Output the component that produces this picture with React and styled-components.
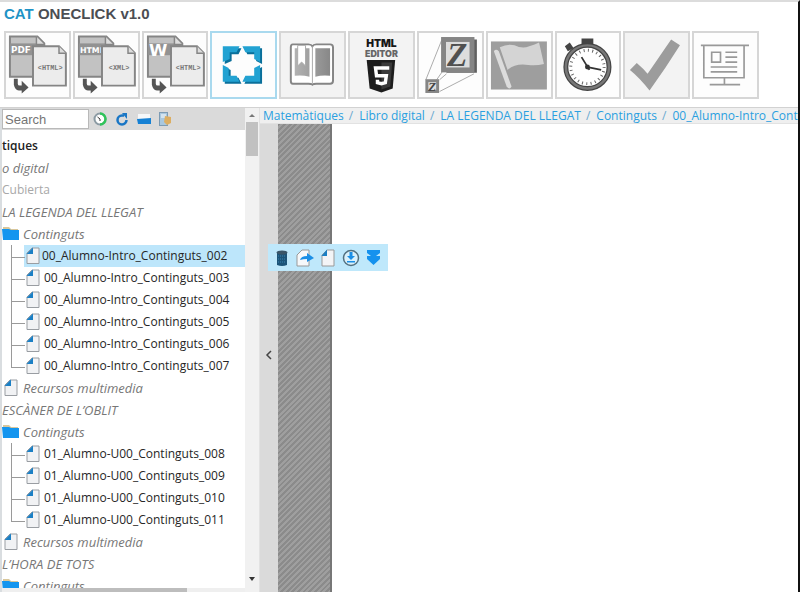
import React from "react";
import styled, { createGlobalStyle } from "styled-components";

const GlobalStyle = createGlobalStyle`
  * { box-sizing: border-box; }
  body { margin: 0; background: #fff; overflow: hidden; font-family: "Trebuchet MS", "Open Sans", sans-serif; font-size: 12px; font-variant-ligatures: none; }
  button { font: inherit; color: inherit; padding: 0; margin: 0; border: 0; background: none; cursor: pointer; }
  svg { display: block; }
`;

const Page = styled.div`
  height: 100vh;
  display: flex;
  flex-direction: column;
  border-top: 2px solid #dcdcdc;
  border-right: 2px solid #111;
`;
const Title = styled.h1`
  margin: 0;
  padding: 3px 4px 0;
  height: 29px;
  font: bold 15px/18px "Liberation Sans", Arial, sans-serif;
  color: #4b4e53;
  span { color: #1f93c6; }
`;
const Toolbar = styled.nav`
  display: grid;
  grid-template-columns: repeat(11, 1fr);
  gap: 2px;
  max-width: 759px;
  padding-left: 4px;
  height: 76px;
  align-items: start;
`;
const Tool = styled.button`
  && {
    height: 68px;
    border: 2px solid ${(p) => (p.$active ? "#a9d9ee" : "#d6d6d6")};
    background: ${(p) => (p.$shade ? "#f3f3f3" : "#fdfdfd")};
  }
  svg { width: 100%; height: 64px; }
`;
const Workspace = styled.div`
  flex: 1;
  min-height: 0;
  display: flex;
  border-top: 1px solid #d2d2d2;
`;
const Sidebar = styled.aside`
  width: 260px;
  flex: none;
  display: flex;
  border-left: 2px solid #d9dde0;
  border-right: 1px solid #e2e2e2;
`;
const Panel = styled.div`
  flex: 1;
  min-width: 0;
  display: flex;
  flex-direction: column;
`;
const SearchBar = styled.div`
  height: 22px;
  flex: none;
  display: flex;
  align-items: center;
  gap: 6px;
  background: #dadada;
`;
const SearchInput = styled.input`
  width: 87px;
  height: 20px;
  margin-right: -3px;
  padding: 0 2px;
  border: 1px solid #b9b9b9;
  background: #fff;
  font: 13px "Liberation Sans", Arial, sans-serif;
  &::placeholder { color: #757575; opacity: 1; }
`;
const SmallButton = styled.button`
  && { width: 16px; height: 16px; }
`;
const Tree = styled.div`
  flex: 1;
  min-height: 0;
  overflow: hidden;
  padding-top: 5px;
`;
const Row = styled.button`
  && {
    width: 100%;
    height: 22px;
    display: flex;
    align-items: center;
    text-align: left;
    white-space: nowrap;
    font-size: 13px;
    line-height: 22px;
    color: #777;
    font-style: italic;
  }
`;
const RootRow = styled(Row)`
  && { color: #222; font-size: 12px; font-style: normal; font-weight: 600; }
`;
const CoverRow = styled(Row)`
  && { color: #a8a8a8; font-size: 12px; font-style: normal; }
`;
const BranchRow = styled(Row)`
  && { gap: 4px; }
`;
const IconSlot = styled.span`
  flex: none;
  width: 17px;
  display: flex;
  justify-content: center;
`;
const Leaf = styled(Row)`
  && { color: #262626; font-size: 12px; font-style: normal; }
`;
const Twig = styled.span`
  position: relative;
  align-self: stretch;
  flex: none;
  width: 22px;
  &::before {
    content: "";
    position: absolute;
    left: 9px;
    top: 0;
    width: 13px;
    height: 12px;
    border-left: 1px solid #9a9a9a;
    border-bottom: 1px solid #9a9a9a;
  }
  &::after {
    content: "";
    display: ${(p) => (p.$last ? "none" : "block")};
    position: absolute;
    left: 9px;
    top: 11px;
    bottom: 0;
    border-left: 1px solid #9a9a9a;
  }
`;
const LeafLabel = styled.span`
  flex: 1;
  display: flex;
  align-items: center;
  gap: ${(p) => (p.$selected ? 2 : 4)}px;
  padding-left: 2px;
  background: ${(p) => (p.$selected ? "#bde6fb" : "transparent")};
`;
const HScroll = styled.div`
  height: 4px;
  flex: none;
  background: #efefef;
  display: flex;
  justify-content: center;
  &::before { content: ""; width: 52%; background: #bdbdbd; }
`;
const VScroll = styled.div`
  width: 14px;
  flex: none;
  display: flex;
  flex-direction: column;
  align-items: center;
  background: #f1f1f1;
  padding: 5px 0 10px;
`;
const Thumb = styled.div`
  width: 12px;
  height: 34px;
  margin: 4px 0 auto;
  background: #c1c1c1;
`;
const Main = styled.main`
  flex: 1;
  min-width: 0;
  display: flex;
  flex-direction: column;
`;
const Breadcrumb = styled.nav`
  height: 16px;
  flex: none;
  overflow: hidden;
  white-space: nowrap;
  padding-left: 3px;
  line-height: 15px;
  background: #efefef;
  border-bottom: 1px solid #e2e2e2;
  color: #6ba9cf;
  a { color: #2a9fe0; text-decoration: none; }
  a + a::before { content: "/"; padding: 0 6px 0 5px; color: #6ba9cf; }
`;
const Stage = styled.div`
  position: relative;
  flex: 1;
  display: flex;
`;
const Collapse = styled.button`
  && {
    width: 18px;
    display: flex;
    align-items: center;
    justify-content: center;
    padding-bottom: 6px;
    background: #dadada;
  }
`;
const Hatch = styled.div`
  width: 54px;
  border-right: 2px solid #777;
  background: repeating-linear-gradient(135deg, #8b8b8b 0 2px, #9f9f9f 2px 4px);
`;
const Canvas = styled.div`
  flex: 1;
  background: #fff;
`;
const Actions = styled.div`
  position: absolute;
  left: 8px;
  top: 120px;
  height: 27px;
  display: flex;
  align-items: center;
  gap: 3px;
  padding: 0 4px;
  background: #bfe8fb;
`;
const Action = styled.button`
  && { width: 20px; height: 20px; }
`;

const Convert = ({ from, to, size = 9 }) => (
  <svg viewBox="0 0 64 64">
    <path d="M4 3H32L39 10V44H4Z" fill="#c2c2c2" stroke="#858585" strokeWidth="2" />
    <rect x="4" y="10" width="34" height="12" fill="#929292" />
    <path d="M31 3V11H39" fill="#ddd" stroke="#858585" strokeWidth="1.5" />
    <text x="5" y={size > 12 ? 23 : 20} fontFamily="DejaVu Sans" fontWeight="bold" fontSize={size} fill="#fff">{from}</text>
    <path d="M27.500 13H54L61 20V53H27.500Z" fill="#ececec" stroke="#858585" strokeWidth="2" />
    <path d="M54 13V20H61" fill="#ddd" stroke="#858585" strokeWidth="1.500" />
    <text x="45" y="37" textAnchor="middle" fontFamily="Liberation Mono" fontWeight="bold" fontSize="7" fill="#777">{to}</text>
    <path d="M8 46H12V51Q12 53 14 53H16V48L23 55L16 61V58H13Q9 57 8 52Z" fill="#555" />
  </svg>
);

const FocusIcon = () => (
  <svg viewBox="0 0 64 64">
    {[["#0a6f9a", 2], ["#22a2d2", 0]].map(([c, o]) => (
      <g key={c} fill={c} transform={`translate(${o} ${o})`}>
        <path d="M11 13H28L25 19H18V26L11 29Z" />
        <path d="M31 13H49V29L43 26V19H34Z" />
        <path d="M11 32L17 35V43H25L28 49H11Z" />
        <path d="M49 32V49H31L34 43H43V35Z" />
      </g>
    ))}
  </svg>
);
const BookIcon = () => (
  <svg viewBox="0 0 64 64">
    <defs><linearGradient id="pg"><stop stopColor="#b2b2b2" /><stop offset="1" stopColor="#888" /></linearGradient></defs>
    <path d="M12 11H28Q31 11 32 13Q33 11 36 11H50Q53 11 53 14V48Q53 51 50 51H36Q33 51 32 52Q31 51 28 51H12Q10 51 10 48V14Q10 11 12 11Z" fill="#fff" stroke="#858585" strokeWidth="2" />
    <path d="M14 15H29V44Q22 42 14 43ZM35 15H50V43Q42 42 35 44Z" fill="url(#pg)" />
    <path d="M17 12H25V33L21 29L17 33Z" fill="#fff" stroke="#aaa" />
    <path d="M32 13V51" stroke="#aaa" />
  </svg>
);
const Html5Icon = () => (
  <svg viewBox="0 0 64 64">
    <g fontFamily="Inter" fontWeight="900" textAnchor="middle">
      <text x="32" y="14" fontSize="10.500" fill="#171717">HTML</text>
      <text x="32" y="24" fontSize="9" fill="#666">EDITOR</text>
    </g>
    <path d="M17 27H46L43.500 56L32 60L20 56Z" fill="#1d1d1d" />
    <path d="M32 29.500H43L41 54L32 57Z" fill="#3a3a3a" />
    <path d="M40 35H26L27 43H37L36 50L32 51L28 50V47" fill="none" stroke="#fff" strokeWidth="3.500" />
  </svg>
);
const ZoomIcon = () => (
  <svg viewBox="0 0 64 64">
    <path d="M7 47L23 7M21 47L28 41M21 59L56 41M18 47L25 37" stroke="#aaa" />
    <path d="M25 6H59V40H28Z" fill="#606060" />
    <rect x="25" y="6" width="29" height="31" fill="#ddd" stroke="#858585" strokeWidth="5" />
    <text x="39" y="33" textAnchor="middle" fontFamily="Liberation Serif" fontWeight="bold" fontStyle="italic" fontSize="34" fill="#505050">Z</text>
    <rect x="8" y="48" width="11" height="11" fill="#ddd" stroke="#858585" strokeWidth="3" />
    <text x="13.500" y="58" textAnchor="middle" fontFamily="Liberation Serif" fontWeight="bold" fontStyle="italic" fontSize="13" fill="#444">Z</text>
  </svg>
);
const FlagIcon = () => (
  <svg viewBox="0 0 64 64">
    <rect x="3" y="8" width="57" height="49" fill="#9e9e9e" />
    <path d="M6 18Q8 15 11 18L24 54Q22 58 19 54Z" fill="#dcdcdc" />
    <path d="M12 14Q20 10 27 12Q35 16 42 13Q48 11 52 9L57 31Q49 33 41 32Q28 30 20 37Z" fill="#d4d4d4" />
  </svg>
);
const WatchIcon = () => (
  <svg viewBox="0 0 64 64">
    <path d="M25 5H37V11H25ZM8 13L13 9L17 15L11 18Z" fill="#444" />
    <circle cx="31" cy="34" r="22" fill="#fff" stroke="#444" strokeWidth="5" />
    <circle cx="31" cy="34" r="22" fill="none" stroke="#777" strokeWidth="2.500" />
    <circle cx="31" cy="34" r="17" fill="none" stroke="#666" strokeWidth="3" strokeDasharray="1 3.450" />
    <path d="M25 24L33 37M30 34L45 37" stroke="#333" strokeWidth="1.800" />
    <circle cx="31" cy="34" r="2.500" fill="#333" />
  </svg>
);
const CheckIcon = () => (
  <svg viewBox="0 0 64 64"><path d="M5 37L12 30Q19 36 23 41Q34 25 47 6L56 12Q41 36 25 58Q15 45 5 37Z" fill="#9c9c9c" /></svg>
);
const BoardIcon = () => (
  <svg viewBox="0 0 64 64" fill="none" stroke="#999" strokeWidth="1.700">
    <path d="M7 12H56M10 12V45H51V12M31 45V52M16 52H47M18 19H27V29H18ZM32 19H44M32 24H44M32 29H44M17 34H44M17 39H44" />
  </svg>
);

const FileIcon = () => (
  <svg width="14" height="18" viewBox="0 0 14 18">
    <path d="M6 1H13V16.500H1V6Z" fill="#f1f2f4" stroke="#999da2" />
    <path d="M7 .500V7H.500Z" fill="#1b7fc4" />
  </svg>
);
const FolderIcon = () => (
  <svg width="17" height="16" viewBox="0 0 17 16">
    <path d="M1 1H7L9 3H16V8H1Z" fill="#d9c79b" />
    <path d="M0 3H7L9 4H17V14H1Z" fill="#1495ef" />
  </svg>
);
const Arrow = ({ up }) => (
  <svg width="8" height="5" viewBox="0 0 8 5"><path d={up ? "M1 4L4 1L7 4Z" : "M1 0H7L4 4Z"} fill={up ? "#777" : "#333"} /></svg>
);

const tools = [
  { label: "PDF to HTML", icon: <Convert from="PDF" to="<HTML>" /> },
  { label: "HTML to XML", icon: <Convert from="HTML" to="<XML>" size={8} /> },
  { label: "Word to HTML", icon: <Convert from="W" to="<HTML>" size={17} /> },
  { label: "Focus", icon: <FocusIcon />, active: true },
  { label: "Book", icon: <BookIcon />, shade: true },
  { label: "HTML editor", icon: <Html5Icon />, shade: true },
  { label: "Zoom", icon: <ZoomIcon /> },
  { label: "Flag", icon: <FlagIcon /> },
  { label: "Timer", icon: <WatchIcon /> },
  { label: "Check", icon: <CheckIcon />, shade: true },
  { label: "Board", icon: <BoardIcon /> },
];

const introPages = ["002", "003", "004", "005", "006", "007"];
const unitPages = ["008", "009", "010", "011"];

const Pages = ({ prefix, ids, selected }) =>
  ids.map((id, i) => (
    <Leaf key={id}>
      <Twig $last={i === ids.length - 1} />
      <LeafLabel $selected={id === selected}><FileIcon />{prefix}{id}</LeafLabel>
    </Leaf>
  ));

const Folder = () => <BranchRow><IconSlot><FolderIcon /></IconSlot>Continguts</BranchRow>;
const Media = () => <BranchRow><IconSlot><FileIcon /></IconSlot>Recursos multimedia</BranchRow>;

const crumbs = ["Matemàtiques", "Libro digital", "LA LEGENDA DEL LLEGAT", "Continguts", "00_Alumno-Intro_Continguts_002"];

export default function App() {
  return (
    <Page>
      <GlobalStyle />
      <Title><span>CAT</span> ONECLICK v1.0</Title>
      <Toolbar>
        {tools.map((t) => (
          <Tool key={t.label} aria-label={t.label} $active={t.active} $shade={t.shade}>{t.icon}</Tool>
        ))}
      </Toolbar>
      <Workspace>
        <Sidebar>
          <Panel>
            <SearchBar>
              <SearchInput placeholder="Search" aria-label="Search" />
              <SmallButton aria-label="History">
                <svg viewBox="0 0 16 16"><circle cx="8" cy="8" r="5.500" fill="#fff" stroke="#8b9aa3" strokeWidth="2" /><path d="M8 2.500A5.500 5.500 0 0 1 8 13.500" fill="none" stroke="#2fc45a" strokeWidth="2.500" /><path d="M5.500 6L8 8V10" fill="none" stroke="#333" /></svg>
              </SmallButton>
              <SmallButton aria-label="Refresh">
                <svg viewBox="0 0 16 16"><path d="M12.500 9A4.500 4.500 0 1 1 8 4.500H10" fill="none" stroke="#1976c5" strokeWidth="2.500" /><path d="M8 2L13 2V8Z" fill="#1976c5" /></svg>
              </SmallButton>
              <SmallButton aria-label="Open folder">
                <svg viewBox="0 0 16 16"><path d="M2 3H14V9H2Z" fill="#f6f8fa" /><path d="M1 8L15 7V13H2Z" fill="#1681d4" /></svg>
              </SmallButton>
              <SmallButton aria-label="Import">
                <svg viewBox="0 0 16 16"><rect x="1.500" y="1.500" width="8" height="13" fill="#a9c8df" stroke="#7d9bb3" /><path d="M3 4H8M3 6H8" stroke="#fff" /><path d="M7 5L13 6V12L9 14L6 11Z" fill="#dcae62" /></svg>
              </SmallButton>
            </SearchBar>
            <Tree>
              <RootRow>tiques</RootRow>
              <Row>o digital</Row>
              <CoverRow>Cubierta</CoverRow>
              <Row>LA LEGENDA DEL LLEGAT</Row>
              <Folder />
              <Pages prefix="00_Alumno-Intro_Continguts_" ids={introPages} selected="002" />
              <Media />
              <Row>ESCÀNER DE L’OBLIT</Row>
              <Folder />
              <Pages prefix="01_Alumno-U00_Continguts_" ids={unitPages} />
              <Media />
              <Row>L’HORA DE TOTS</Row>
              <Folder />
            </Tree>
            <HScroll />
          </Panel>
          <VScroll><Arrow up /><Thumb /><Arrow /></VScroll>
        </Sidebar>
        <Main>
          <Breadcrumb>
            {crumbs.map((c) => <a key={c} href="#">{c}</a>)}
          </Breadcrumb>
          <Stage>
            <Collapse aria-label="Collapse sidebar">
              <svg width="8" height="10" viewBox="0 0 8 10"><path d="M6 1L2 5L6 9" fill="none" stroke="#444" strokeWidth="1.500" /></svg>
            </Collapse>
            <Hatch />
            <Canvas />
            <Actions>
              <Action aria-label="Delete">
                <svg viewBox="0 0 20 20"><path d="M5 5H15V17Q10 19 5 17Z" fill="#1d5478" /><ellipse cx="10" cy="4.500" rx="5.500" ry="2" fill="#3a5568" /><path d="M6 8H14M6 11H14M6 14H14" stroke="#3a83b0" strokeDasharray="1 1" /></svg>
              </Action>
              <Action aria-label="Export">
                <svg viewBox="0 0 20 20"><path d="M7 2H14V18H2V7Z" fill="#f6f8fa" stroke="#999" /><path d="M5 12Q6 8 12 8V5L19 10L12 14V11Q8 11 5 12Z" fill="#1b8fe6" /></svg>
              </Action>
              <Action aria-label="New page">
                <svg viewBox="0 0 20 20"><path d="M9 2H16V18H4V7Z" fill="#f3f4f6" stroke="#999" /><path d="M9 1.500V8H3.500Z" fill="#1b7fc4" /></svg>
              </Action>
              <Action aria-label="Download">
                <svg viewBox="0 0 20 20"><circle cx="10" cy="10" r="7.500" fill="#d9f0fb" stroke="#52707f" strokeWidth="1.500" /><path d="M8.500 4H11.500V8H14L10 12L6 8H8.500ZM6 13H14V14.500H6Z" fill="#1b8fe6" /></svg>
              </Action>
              <Action aria-label="Move down">
                <svg viewBox="0 0 20 20"><path d="M3 2H16V5L12 8H16V11L9.500 17L3 11V8H7L3 5Z" fill="#1592ee" /></svg>
              </Action>
            </Actions>
          </Stage>
        </Main>
      </Workspace>
    </Page>
  );
}
